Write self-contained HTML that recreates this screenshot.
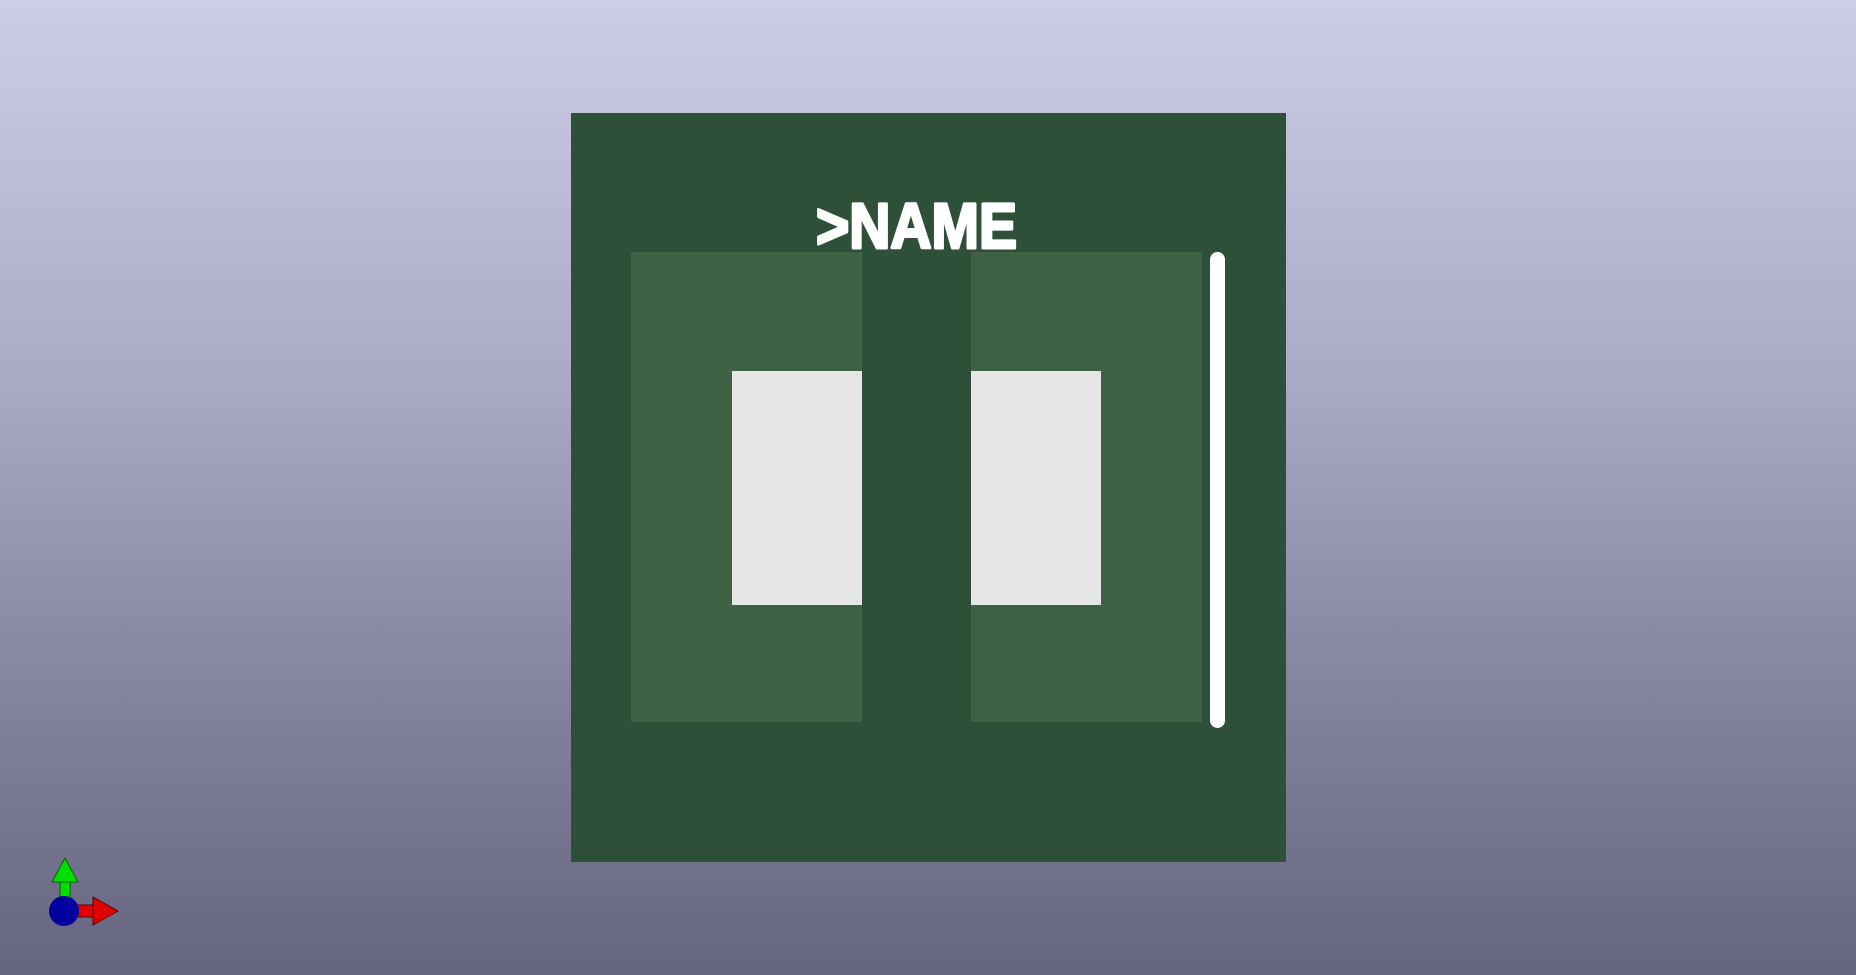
<!DOCTYPE html>
<html><head><style>
html,body{margin:0;padding:0}
body{width:1856px;height:975px;overflow:hidden;position:relative;background:linear-gradient(#cdcde8 0%,#a9a9c6 40%,#8a8aa6 65%,#656580 100%);}
div{position:absolute}
</style></head><body>
<div style="left:571px;top:113px;width:715px;height:749px;background:#2e5039"></div>
<div style="left:631px;top:252px;width:231px;height:470px;background:#3e6243"></div>
<div style="left:971px;top:252px;width:231px;height:470px;background:#3e6243"></div>
<div style="left:732px;top:371px;width:130px;height:234px;background:#e6e6e6"></div>
<div style="left:971px;top:371px;width:130px;height:234px;background:#e6e6e6"></div>
<div style="left:1210px;top:252px;width:15px;height:476px;background:#fff;border-radius:8px"></div>
<svg width="1856" height="975" style="position:absolute;left:0;top:0">
<text x="816" y="248" font-family="Liberation Sans, sans-serif" font-weight="bold" font-size="64" fill="#fff" stroke="#fff" stroke-width="3" stroke-linejoin="round" textLength="201" lengthAdjust="spacingAndGlyphs">&gt;NAME</text>
<rect x="60" y="880" width="10" height="20" fill="#00e000" stroke="#006000" stroke-width="1"/>
<polygon points="65,858 52,882 78,882" fill="#00e000" stroke="#006000" stroke-width="1"/>
<rect x="76" y="905" width="18" height="12" fill="#e00000" stroke="#600000" stroke-width="1"/>
<polygon points="118,911 93,897 93,925" fill="#e00000" stroke="#600000" stroke-width="1"/>
<circle cx="64" cy="911" r="15" fill="#0000a0"/>
</svg>
</body></html>
